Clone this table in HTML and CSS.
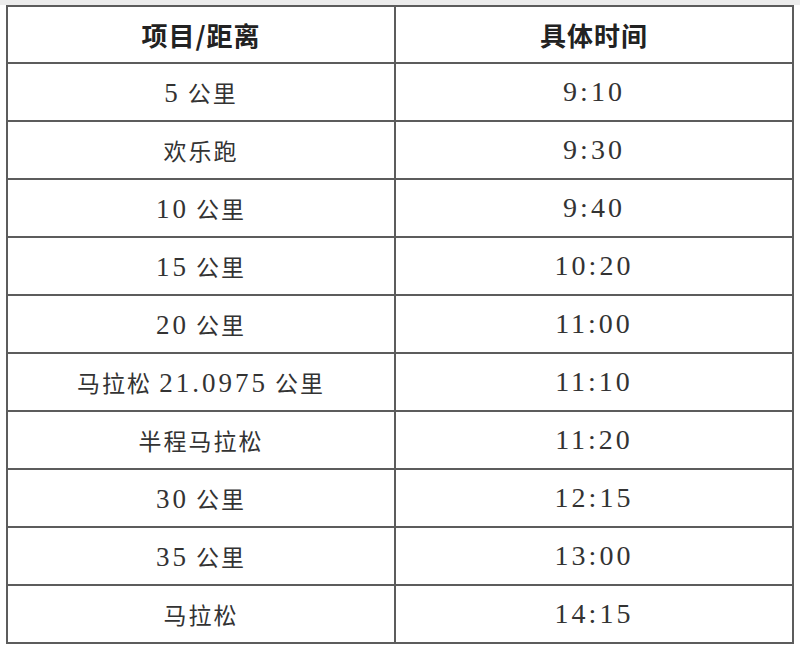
FILE: index.html
```html
<!DOCTYPE html>
<html lang="zh">
<head>
<meta charset="utf-8">
<link rel="stylesheet" href="styles.css">
</head>
<body>
<div class="page">
<table class="schedule">
  <thead>
    <tr><th class="col-a">项目/距离</th><th class="col-b">具体时间</th></tr>
  </thead>
  <tbody>
    <tr><td><span class="num">5</span> 公里</td><td class="time">9:10</td></tr>
    <tr><td>欢乐跑</td><td class="time">9:30</td></tr>
    <tr><td><span class="num">10</span> 公里</td><td class="time">9:40</td></tr>
    <tr><td><span class="num">15</span> 公里</td><td class="time">10:20</td></tr>
    <tr><td><span class="num">20</span> 公里</td><td class="time">11:00</td></tr>
    <tr><td>马拉松 <span class="num">21.0975</span> 公里</td><td class="time">11:10</td></tr>
    <tr><td>半程马拉松</td><td class="time">11:20</td></tr>
    <tr><td><span class="num">30</span> 公里</td><td class="time">12:15</td></tr>
    <tr><td><span class="num">35</span> 公里</td><td class="time">13:00</td></tr>
    <tr><td>马拉松</td><td class="time">14:15</td></tr>
  </tbody>
</table>
</div>
</body>
</html>
```
FILE: styles.css
```css
html, body {
  margin: 0;
  padding: 0;
  background: #ffffff;
}
.page {
  padding: 5px 0 0 6px;
  background: linear-gradient(#ececec 0, #ececec 5px, #ffffff 5px);
  height: 649px;
  box-sizing: border-box;
}
.schedule {
  border-collapse: collapse;
  width: 788px;
  table-layout: fixed;
  font-family: "Noto Sans CJK SC", sans-serif;
  color: #333;
}
.schedule th,
.schedule td {
  border: 2px solid #5c5c5c;
  text-align: center;
  vertical-align: middle;
  padding: 0;
}
.col-a { width: 386px; }
.schedule th {
  height: 55px;
  font-size: 26px;
  font-weight: 700;
  color: #222;
  letter-spacing: 1px;
}
.schedule td {
  height: 56px;
  font-size: 23px;
  font-weight: 400;
  letter-spacing: 2px;
}
.num {
  font-family: "Liberation Serif", "Noto Sans CJK SC", serif;
  font-size: 27px;
  letter-spacing: 3px;
}
.schedule td.time {
  font-family: "Liberation Serif", serif;
  font-size: 28px;
  letter-spacing: 3px;
}
```
